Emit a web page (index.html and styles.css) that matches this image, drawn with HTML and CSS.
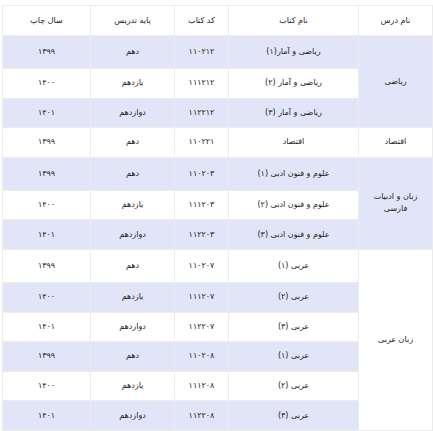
FILE: index.html
```html
<!DOCTYPE html>
<html lang="fa" dir="rtl">
<head>
<meta charset="utf-8">
<link rel="stylesheet" href="styles.css">
</head>
<body>
<table class="books">
  <colgroup>
    <col class="c-dars"><col class="c-ketab"><col class="c-code"><col class="c-paye"><col class="c-sal">
  </colgroup>
  <thead>
    <tr><th>نام درس</th><th>نام کتاب</th><th>کد کتاب</th><th>پایه تدریس</th><th>سال چاپ</th></tr>
  </thead>
  <tbody>
    <tr class="group"><td rowspan="3">ریاضی</td><td>ریاضی و آمار(۱)</td><td>۱۱۰۲۱۲</td><td>دهم</td><td>۱۳۹۹</td></tr>
    <tr><td>ریاضی و آمار (۲)</td><td>۱۱۱۲۱۲</td><td>یازدهم</td><td>۱۴۰۰</td></tr>
    <tr><td>ریاضی و آمار (۳)</td><td>۱۱۲۲۱۲</td><td>دوازدهم</td><td>۱۴۰۱</td></tr>
    <tr><td>اقتصاد</td><td>اقتصاد</td><td>۱۱۰۲۲۱</td><td>دهم</td><td>۱۳۹۹</td></tr>
    <tr class="group"><td rowspan="3">زبان و ادبیات فارسی</td><td>علوم و فنون ادبی (۱)</td><td>۱۱۰۲۰۳</td><td>دهم</td><td>۱۳۹۹</td></tr>
    <tr><td>علوم و فنون ادبی (۲)</td><td>۱۱۱۲۰۳</td><td>یازدهم</td><td>۱۴۰۰</td></tr>
    <tr><td>علوم و فنون ادبی (۳)</td><td>۱۱۲۲۰۳</td><td>دوازدهم</td><td>۱۴۰۱</td></tr>
    <tr class="group"><td rowspan="6">زبان عربی</td><td>عربی (۱)</td><td>۱۱۰۲۰۷</td><td>دهم</td><td>۱۳۹۹</td></tr>
    <tr><td>عربی (۲)</td><td>۱۱۱۲۰۷</td><td>یازدهم</td><td>۱۴۰۰</td></tr>
    <tr><td>عربی (۳)</td><td>۱۱۲۲۰۷</td><td>دوازدهم</td><td>۱۴۰۱</td></tr>
    <tr><td>عربی (۱)</td><td>۱۱۰۲۰۸</td><td>دهم</td><td>۱۳۹۹</td></tr>
    <tr><td>عربی (۲)</td><td>۱۱۱۲۰۸</td><td>یازدهم</td><td>۱۴۰۰</td></tr>
    <tr><td>عربی (۳)</td><td>۱۱۲۲۰۸</td><td>دوازدهم</td><td>۱۴۰۱</td></tr>
  </tbody>
</table>
</body>
</html>
```
FILE: styles.css
```css
html, body {
  margin: 0;
  padding: 0;
  background: #ffffff;
}
body {
  font-family: "DejaVu Sans", "Noto Sans", sans-serif;
  font-size: 8px;
  color: #1a1a1a;
}
.books {
  margin-top: 5px;
  width: 430px;
  border-collapse: collapse;
  table-layout: fixed;
}
.c-dars { width: 74px; }
.c-ketab { width: 130px; }
.c-code { width: 54px; }
.c-paye { width: 84px; }
.c-sal { width: 88px; }
.books th, .books td {
  border: 1px solid #ececec;
  height: 28.6px;
  padding: 0 8px;
  text-align: center;
  vertical-align: middle;
  font-weight: normal;
  line-height: 12px;
}
.books th {
  height: 29px;
}
.books tr.group td {
  height: 32px;
}
.books tr.group td[rowspan] {
  height: auto;
}
.books tbody tr:nth-child(odd) {
  background: #e2e5f8;
}
```
